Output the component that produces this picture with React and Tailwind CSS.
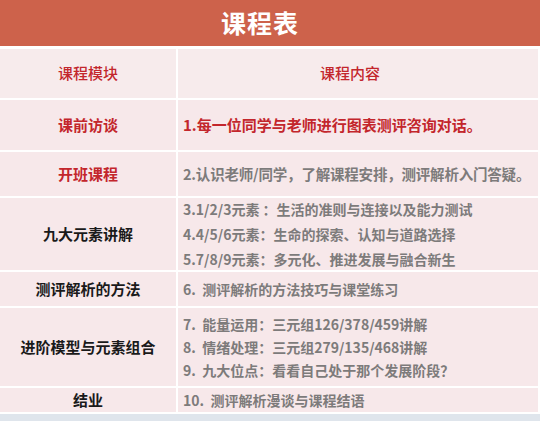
import React from 'react';

const font = { fontFamily: '"Noto Sans CJK SC", "Noto Sans", sans-serif' };

const rows = [
  { title: '课前访谈', titleClass: 'text-[#c3262c] font-bold', h: 'h-[50px]', items: ['1.每一位同学与老师进行图表测评咨询对话。'], itemClass: 'text-[15px] text-[#c3262c] font-bold' },
  { title: '开班课程', titleClass: 'text-[#c3262c] font-bold', h: 'h-[44px]', items: ['2.认识老师/同学，了解课程安排，测评解析入门答疑。'], itemClass: 'text-[14.5px] tracking-[-0.2px] text-[#7d7b7b] font-semibold' },
  {
    title: '九大元素讲解',
    titleClass: 'text-[#1a1a1a] font-bold',
    h: 'h-[72px]',
    items: ['3.1/2/3元素 ：生活的准则与连接以及能力测试', '4.4/5/6元素：生命的探索、认知与道路选择', '5.7/8/9元素：多元化、推进发展与融合新生'],
    itemClass: 'text-[14px] text-[#7d7b7b] font-semibold leading-[25px]',
  },
  { title: '测评解析的方法', titleClass: 'text-[#1a1a1a] font-bold', h: 'h-[34px]', items: ['6.  测评解析的方法技巧与课堂练习'], itemClass: 'text-[14px] text-[#7d7b7b] font-semibold' },
  {
    title: '进阶模型与元素组合',
    titleClass: 'text-[#1a1a1a] font-bold',
    h: 'h-[78px]',
    items: ['7.  能量运用：三元组126/378/459讲解', '8.  情绪处理：三元组279/135/468讲解', '9.  九大位点：看看自己处于那个发展阶段？'],
    itemClass: 'text-[14px] text-[#7d7b7b] font-semibold leading-[23px]',
  },
  { title: '结业', titleClass: 'text-[#1a1a1a] font-bold', h: 'h-[24px]', items: ['10.  测评解析漫谈与课程结语'], itemClass: 'text-[14px] text-[#7d7b7b] font-semibold' },
];

export default function App() {
  return (
    <div className="w-[540px] h-[421px] overflow-hidden bg-[#dfe5ec]" style={font}>
      <div className="h-[46px] bg-[#cd624b] flex items-center justify-center pr-[20px]">
        <h1 className="text-[25px] font-bold text-white tracking-[1px]">课程表</h1>
      </div>

      <div className="bg-white pt-[3px] pb-[2px] pr-[2px] grid grid-cols-[176px_1fr] gap-[2px]">
        <div className="h-[49px] bg-[#f7ebec] flex items-center justify-center text-[15px] text-[#c3262c] font-medium">
          课程模块
        </div>
        <div className="h-[49px] bg-[#f7ebec] flex items-center justify-center pr-[16px] text-[15px] text-[#c3262c] font-medium">
          课程内容
        </div>

        {rows.map((row) => (
          <React.Fragment key={row.title}>
            <div className={`${row.h} bg-[#f7e8ea] flex items-center justify-center text-[15px] ${row.titleClass}`}>
              {row.title}
            </div>
            <div className={`${row.h} bg-[#f7e8ea] flex flex-col justify-center pl-[5px] whitespace-pre`}>
              {row.items.map((item) => (
                <p key={item} className={row.itemClass}>
                  {item}
                </p>
              ))}
            </div>
          </React.Fragment>
        ))}
      </div>
    </div>
  );
}
